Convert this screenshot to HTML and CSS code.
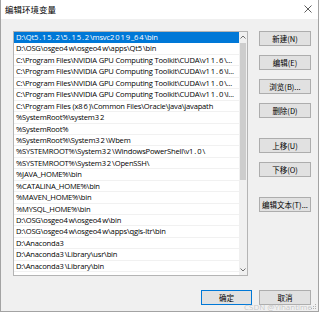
FILE: index.html
```html
<!DOCTYPE html>
<html lang="zh-CN">
<head>
    <meta charset="UTF-8">
    <meta name="viewport" content="width=device-width, initial-scale=1.0">
    <title>编辑环境变量</title>
    <link rel="stylesheet" href="styles.css">
</head>
<body>

    <div class="dialog">
        <div class="titlebar">
            <span class="title">编辑环境变量</span>
            <svg class="close" width="8" height="8" viewBox="0 0 8 8">
                <path d="M0.5 0.5 L7.5 7.5 M7.5 0.5 L0.5 7.5" stroke="#333" stroke-width="0.8" fill="none"/>
            </svg>
        </div>

        <div class="content">
            <div class="main">
                <!-- Path list -->
                <div class="listbox">
                    <ul class="paths">
                        <li class="selected">D:\Qt<span class="num">5.15.2</span>\<span class="num">5.15.2</span>\msvc<span class="num">2019</span>_<span class="num">64</span>\bin</li>
                        <li>D:\OSG\osgeo<span class="num">4</span>w\osgeo<span class="num">4</span>w\apps\Qt<span class="num">5</span>\bin</li>
                        <li>C:\Program Files\NVIDIA GPU Computing Toolkit\CUDA\v<span class="num">11.6</span>\...</li>
                        <li>C:\Program Files\NVIDIA GPU Computing Toolkit\CUDA\v<span class="num">11.6</span>\l...</li>
                        <li>C:\Program Files\NVIDIA GPU Computing Toolkit\CUDA\v<span class="num">11.0</span>\...</li>
                        <li>C:\Program Files\NVIDIA GPU Computing Toolkit\CUDA\v<span class="num">11.0</span>\l...</li>
                        <li>C:\Program Files (x<span class="num">86</span>)\Common Files\Oracle\Java\javapath</li>
                        <li>%SystemRoot%\system<span class="num">32</span></li>
                        <li>%SystemRoot%</li>
                        <li>%SystemRoot%\System<span class="num">32</span>\Wbem</li>
                        <li>%SYSTEMROOT%\System<span class="num">32</span>\WindowsPowerShell\v<span class="num">1.0</span>\</li>
                        <li>%SYSTEMROOT%\System<span class="num">32</span>\OpenSSH\</li>
                        <li>%JAVA_HOME%\bin</li>
                        <li>%CATALINA_HOME%\bin</li>
                        <li>%MAVEN_HOME%\bin</li>
                        <li>%MYSQL_HOME%\bin</li>
                        <li>D:\OSG\osgeo<span class="num">4</span>w\osgeo<span class="num">4</span>w\bin</li>
                        <li>D:\OSG\osgeo<span class="num">4</span>w\osgeo<span class="num">4</span>w\apps\qgis-ltr\bin</li>
                        <li>D:\Anaconda<span class="num">3</span></li>
                        <li>D:\Anaconda<span class="num">3</span>\Library\usr\bin</li>
                        <li>D:\Anaconda<span class="num">3</span>\Library\bin</li>
                        <li>D:\Anaconda<span class="num">3</span>\Scripts</li>
                    </ul>
                    <div class="scrollbar">
                        <div class="arrow">
                            <svg width="6" height="4" viewBox="0 0 6 4"><path d="M0.5 3.5 L3 1 L5.5 3.5" stroke="#606060" stroke-width="0.9" fill="none"/></svg>
                        </div>
                        <div class="track"><div class="thumb"></div></div>
                        <div class="arrow">
                            <svg width="6" height="4" viewBox="0 0 6 4"><path d="M0.5 0.5 L3 3 L5.5 0.5" stroke="#606060" stroke-width="0.9" fill="none"/></svg>
                        </div>
                    </div>
                </div>

                <!-- Action buttons -->
                <div class="actions">
                    <button class="btn">新建(N)</button>
                    <button class="btn">编辑(E)</button>
                    <button class="btn">浏览(B)...</button>
                    <button class="btn">删除(D)</button>
                    <button class="btn group">上移(U)</button>
                    <button class="btn">下移(O)</button>
                    <button class="btn group">编辑文本(T)...</button>
                </div>
            </div>

            <div class="footer">
                <button class="btn default">确定</button>
                <button class="btn">取消</button>
            </div>

            <span class="watermark">CSDN @Yihantime</span>
            <svg class="grip" width="6" height="6" viewBox="0 0 6 6">
                <rect x="4" y="0" width="1" height="1" fill="#b0b0b0"/>
                <rect x="2" y="2" width="1" height="1" fill="#b0b0b0"/>
                <rect x="4" y="2" width="1" height="1" fill="#b0b0b0"/>
                <rect x="0" y="4" width="1" height="1" fill="#b0b0b0"/>
                <rect x="2" y="4" width="1" height="1" fill="#b0b0b0"/>
                <rect x="4" y="4" width="1" height="1" fill="#b0b0b0"/>
            </svg>
        </div>
    </div>

</body>
</html>
```

FILE: styles.css
```css
body {
    margin: 0;
    background-color: #fff;
    font-family: "Open Sans", "Noto Sans CJK SC", sans-serif;
}

.dialog {
    width: 319px;
    height: 312px;
    box-sizing: border-box;
    border-left: 1px solid #a3a3a3;
    border-right: 1px solid #a3a3a3;
    border-bottom: 1px solid #a3a3a3;
    background-color: #f0f0f0;
    display: flex;
    flex-direction: column;
}

.titlebar {
    height: 18px;
    background-color: #fff;
    display: flex;
    align-items: center;
    justify-content: space-between;
    padding: 0 6px 1px 4px;
}

.title {
    font-family: "Noto Sans CJK SC", sans-serif;
    font-size: 8.5px;
    color: #000;
}

.content {
    position: relative;
    flex: 1;
    padding: 12px 7px 0 12px;
}

.main {
    display: flex;
    gap: 11px;
}

.listbox {
    width: 235px;
    height: 245px;
    box-sizing: border-box;
    border: 1px solid #b4b4b4;
    background-color: #fff;
    display: flex;
    overflow: hidden;
}

.paths {
    list-style: none;
    margin: 0;
    padding: 0;
    width: 225px;
    overflow: hidden;
}

.paths li {
    height: 11.45px;
    line-height: 11.45px;
    box-sizing: border-box;
    padding-left: 2px;
    font-size: 7.6px;
    letter-spacing: -0.2px;
    color: #000;
    white-space: nowrap;
    overflow: hidden;
    border-bottom: 1px solid #f1f1f1;
}

.paths .num {
    letter-spacing: 0.9px;
}

.paths li.selected {
    background-color: #0078d7;
    color: #fff;
    border-bottom-color: #0078d7;
}

.scrollbar {
    width: 8px;
    background-color: #f0f0f0;
    display: flex;
    flex-direction: column;
}

.arrow {
    height: 10px;
    display: flex;
    align-items: center;
    justify-content: center;
}

.track {
    flex: 1;
    padding: 1px 1px 0;
}

.thumb {
    height: 137px;
    background-color: #cdcdcd;
}

.actions {
    width: 52px;
    display: flex;
    flex-direction: column;
    gap: 9px;
}

.btn {
    height: 15px;
    width: 52px;
    padding: 0;
    border: 1px solid #adadad;
    background-color: #e1e1e1;
    font-family: "Noto Sans CJK SC", sans-serif;
    font-size: 7.5px;
    color: #000;
}

.actions .group {
    margin-top: 11px;
}

.footer {
    margin-top: 14px;
    display: flex;
    justify-content: flex-end;
    gap: 7px;
}

.footer .default {
    width: 51px;
    border-color: #0078d7;
}

.watermark {
    position: absolute;
    right: 6px;
    bottom: 0;
    font-size: 8px;
    line-height: 8px;
    color: #c4c4c4;
    text-shadow: 0 0 1px #fff;
}

.grip {
    position: absolute;
    right: 1px;
    bottom: 1px;
}
```
